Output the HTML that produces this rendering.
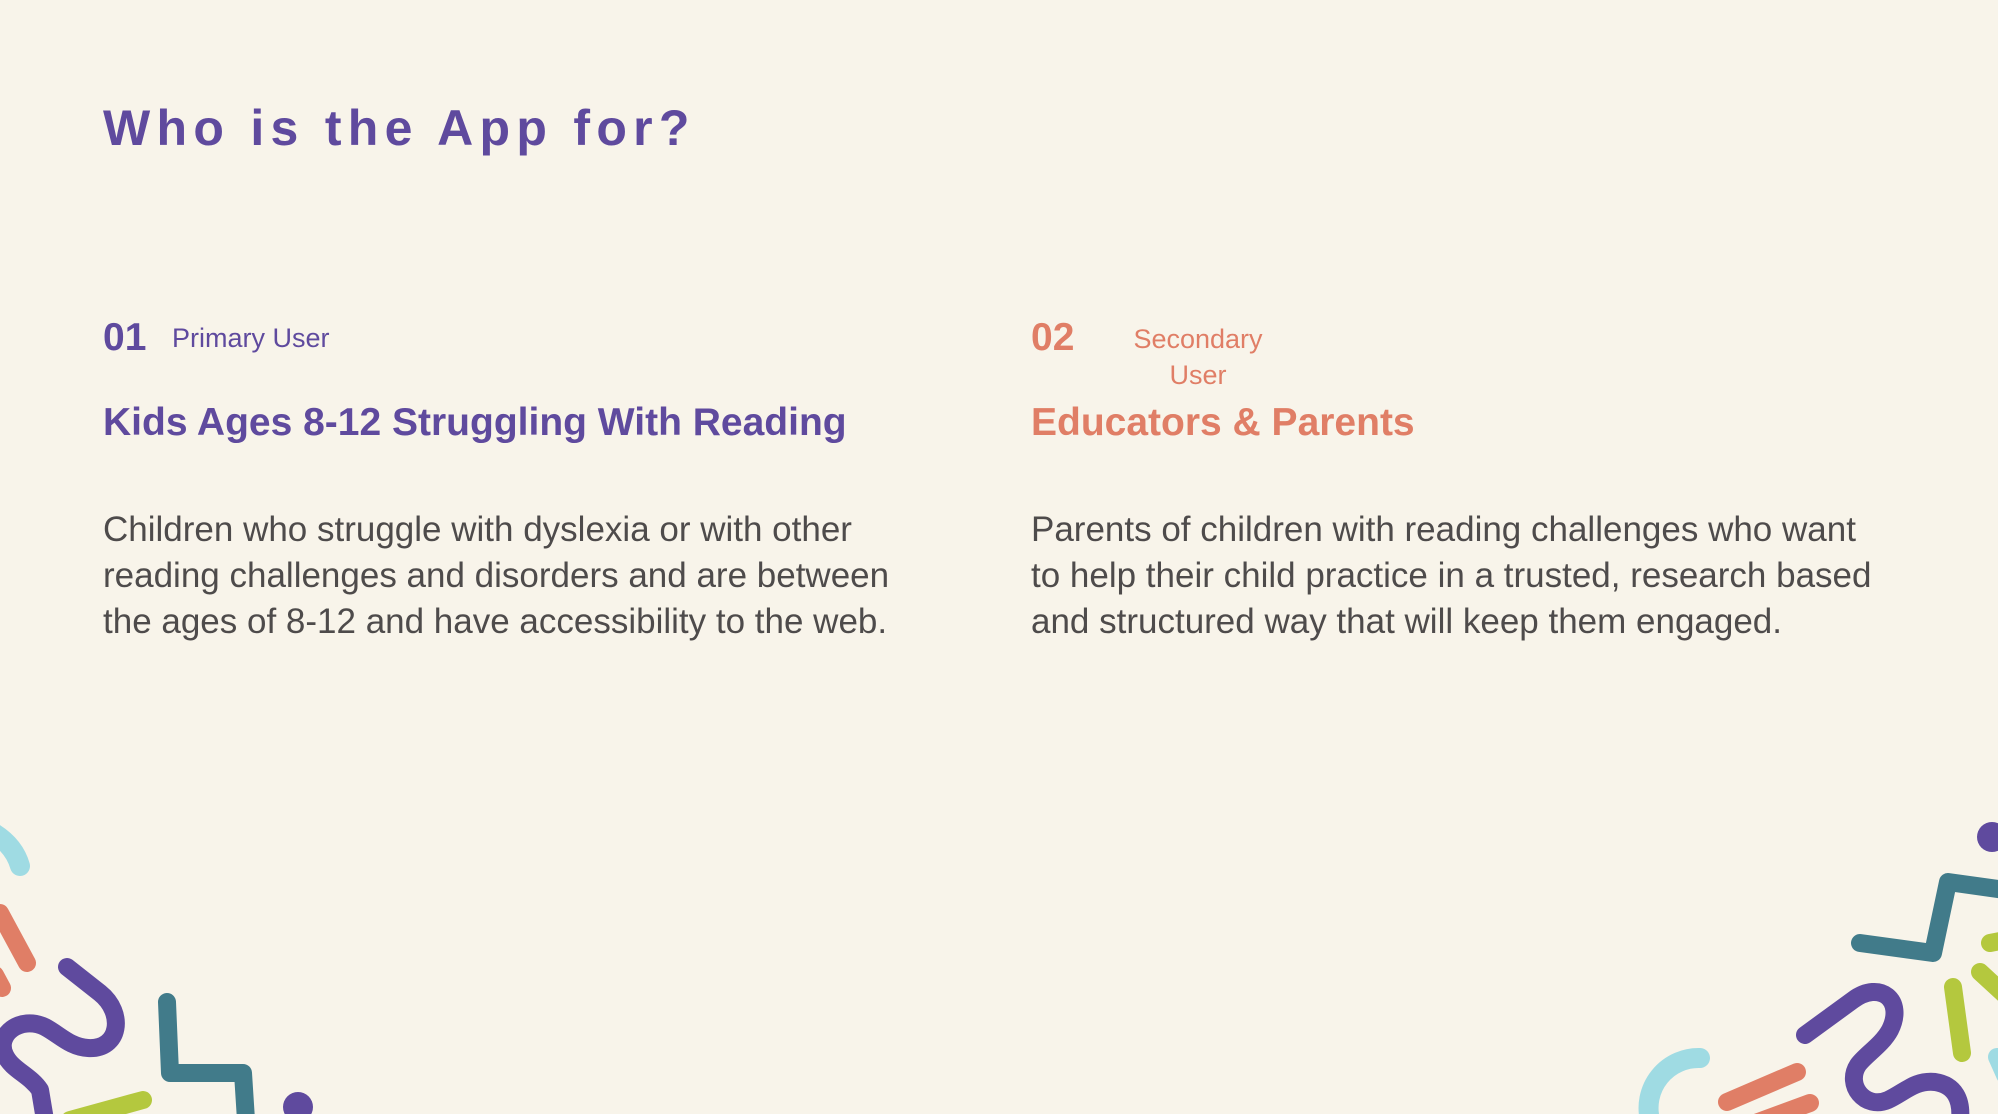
<!DOCTYPE html>
<html><head><meta charset="utf-8"><style>
body{margin:0;width:1998px;height:1114px;background:#f8f4ea;position:relative;overflow:hidden;font-family:"Liberation Sans",sans-serif}
.a{position:absolute;white-space:nowrap}
.p{color:#5f4a9e}.o{color:#e07e66}
.t{left:103px;top:99px;font-size:50px;font-weight:bold;letter-spacing:6.3px}
.n{font-size:39px;font-weight:bold;top:316px}
.s{font-size:27px;top:323px}
.h{font-size:39px;font-weight:bold;top:401px}
.b{font-size:35px;line-height:46px;color:#4e4b4b;top:507px;white-space:normal;width:950px}
</style></head><body>
<div class="a p t">Who is the App for?</div>
<div class="a p n" style="left:103px">01</div>
<div class="a p s" style="left:172px">Primary User</div>
<div class="a p h" style="left:103px">Kids Ages 8-12 Struggling With Reading</div>
<div class="a b" style="left:103px">Children who struggle with dyslexia or with other<br>reading challenges and disorders and are between<br>the ages of 8-12 and have accessibility to the web.</div>
<div class="a o n" style="left:1031px">02</div>
<div class="a o s" style="left:1123px;width:150px;text-align:center;line-height:36px;top:321px;white-space:normal">Secondary User</div>
<div class="a o h" style="left:1031px">Educators &amp; Parents</div>
<div class="a b" style="left:1031px">Parents of children with reading challenges who want<br>to help their child practice in a trusted, research based<br>and structured way that will keep them engaged.</div>
<svg class="a" style="left:0;top:0" width="1998" height="1114" fill="none" stroke-linecap="round" stroke-linejoin="round">
<path d="M-8 832 Q14 845 20 866" stroke="#9fdbe3" stroke-width="20"/>
<path d="M0 913 L27 963" stroke="#e07e66" stroke-width="18"/>
<path d="M-5 975 L2 988" stroke="#e07e66" stroke-width="18"/>
<path d="M67 967 L100 993 C125 1013 120 1050 88 1048 C70 1047 60 1035 45 1027 C20 1015 -5 1035 5 1055 C12 1070 30 1075 40 1090 L45 1120" stroke="#5f4a9e" stroke-width="18"/>
<path d="M167 1002 L170 1073 L243 1073 L246 1120" stroke="#417b8a" stroke-width="18"/>
<path d="M143 1100 L70 1120" stroke="#b4c83e" stroke-width="18"/>
<circle cx="298" cy="1107" r="15" fill="#5f4a9e"/>
<circle cx="1992" cy="837" r="15" fill="#5f4a9e"/>
<path d="M1860 943 L1933 953 L1948 882 L2005 890" stroke="#417b8a" stroke-width="18"/>
<path d="M1990 943 L2005 940" stroke="#b4c83e" stroke-width="18"/>
<path d="M1980 972 L2005 995" stroke="#b4c83e" stroke-width="18"/>
<path d="M1953 987 L1962 1053" stroke="#b4c83e" stroke-width="18"/>
<path d="M1997 1057 L2005 1075" stroke="#9fdbe3" stroke-width="18"/>
<path d="M1805 1035 L1853 1000 C1880 980 1905 1000 1890 1030 C1882 1045 1865 1055 1858 1065 C1845 1085 1865 1110 1888 1100 C1905 1092 1915 1080 1935 1082 C1955 1085 1962 1100 1960 1120" stroke="#5f4a9e" stroke-width="18"/>
<path d="M1700 1058 A50 50 0 0 0 1650 1120" stroke="#9fdbe3" stroke-width="20"/>
<path d="M1727 1102 L1797 1072" stroke="#e07e66" stroke-width="18"/>
<path d="M1810 1103 L1750 1125" stroke="#e07e66" stroke-width="18"/>
</svg>
</body></html>
